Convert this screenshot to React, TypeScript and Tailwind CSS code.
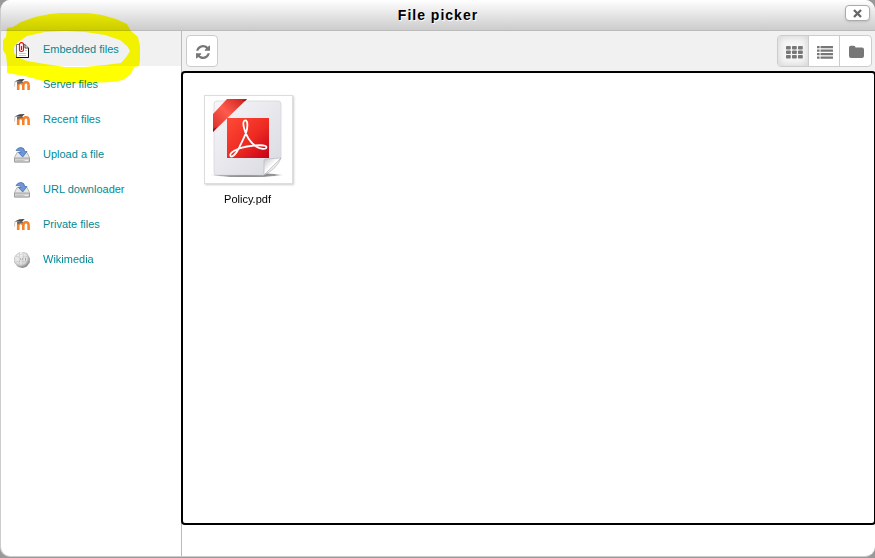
import React, { useState } from 'react'

function PaperclipIcon() {
  return (
    <svg width="16" height="16" viewBox="0 0 16 16" aria-hidden="true">
      <path d="M2.5 2.5H11L14.5 6V15.5H2.5Z" fill="#fff" stroke="#777" />
      <path d="M14.5 6V15.5H2" fill="none" stroke="#111" />
      <path d="M11 2.5V6H14.5" fill="none" stroke="#444" />
      <path d="M11 8.5H13M5 11.5H12M5 13.5H12" stroke="#ccc" />
      <rect x="5" y="0" width="5" height="10" fill="#fff" />
      <path d="M7.500 4V8M9.500 3V8Q9.500 9.500 7.500 9.500T5.500 8V2.500Q5.500 .6 7.500 .6T9.500 2.500V4" fill="none" stroke="#f00" strokeWidth="1.200" />
    </svg>
  )
}

function MoodleIcon() {
  return (
    <svg width="16" height="16" viewBox="0 0 16 16" aria-hidden="true">
      <path
        d="M4.200 13V8.800Q4.200 6 6.700 6T9.300 8.800V13M9.300 8.800Q9.300 5.200 12 5.200T14.600 8.800V13"
        fill="none"
        stroke="#f5822a"
        strokeWidth="2.600"
      />
      <path d="M3 5 8.300 4.500l.8 1.800Q6 5.500 3.300 7.800z" fill="#6a6462" />
      <path d="M.5 4.500 5.500 2.200l5.200-.2L8 4.700z" fill="#4a4645" />
      <path d="M1 4.500 .5 9.500" stroke="#bbb" strokeWidth=".8" />
    </svg>
  )
}

function DownloadIcon() {
  return (
    <svg width="16" height="16" viewBox="0 0 16 16" aria-hidden="true">
      <path d="M3 5.500h10l2.500 5v4.500H.5v-4.500z" fill="#e6e6e6" stroke="#aaa" strokeWidth=".8" />
      <path d="M.5 11h15v4H.5z" fill="#d2d2d2" stroke="#8c8c8c" strokeWidth=".7" />
      <path d="M2.500 13.500h7" stroke="#c0c0c0" />
      <path d="M11 13.500h3" stroke="#eee" />
      <path d="M2 3.500Q3.500.5 7 .5q3.500.2 3.700 4H13L8.700 10 4.500 5.500H7Q6.500 3 2 3.500z" fill="#6f97d6" stroke="#4671b5" strokeWidth=".8" />
    </svg>
  )
}

function WikimediaIcon() {
  return (
    <svg width="16" height="16" viewBox="0 0 16 16" aria-hidden="true">
      <defs>
        <radialGradient id="globe" cx=".4" cy=".35" r=".65">
          <stop offset="0" stopColor="#fafafa" />
          <stop offset=".65" stopColor="#dcdcdc" />
          <stop offset="1" stopColor="#808080" />
        </radialGradient>
      </defs>
      <path d="M2.500 2.500 6 .3l1 1 2-1.300L13 1.500l2.800 5-.2 4-3 4L8.300 16l-4.500-1.500L.3 10V5.500z" fill="url(#globe)" stroke="#999" strokeWidth=".4" />
      <path d="M2 4.500 5 5l1-3M5 5l.5 4L2 10M5.500 9 9 9.500 9.500 5 5 5M9.500 5l4-.5M9 9.500l5 .5M9 9.500 8.500 14M5.500 9 5 13.500M9.500 5 9 2" fill="none" stroke="#a8a8a8" strokeWidth=".4" />
      <path d="m6 6 1 2M8.500 6 8 8M11.500 6v2.500" stroke="#777" strokeWidth=".6" />
      <path d="m5 .8 2 2 2-2" fill="#fff" stroke="#999" strokeWidth=".4" />
    </svg>
  )
}

function RefreshIcon() {
  return (
    <svg width="14" height="14" viewBox="0 0 1536 1536" fill="#777" aria-hidden="true">
      <path d="M1511 928q0 5-1 7-64 268-268 434.500t-478 166.500q-146 0-282.500-55t-243.500-157l-129 129q-19 19-45 19t-45-19-19-45v-448q0-26 19-45t45-19h448q26 0 45 19t19 45-19 45l-137 137q71 66 161 102t187 36q134 0 250-65t186-179q11-17 53-117 8-23 30-23h192q13 0 22.500 9.500t9.500 22.500zm25-800v448q0 26-19 45t-45 19h-448q-26 0-45-19t-19-45 19-45l138-138q-148-137-349-137-134 0-250 65t-186 179q-11 17-53 117-8 23-30 23h-199q-13 0-22.500-9.500t-9.500-22.500v-7q65-268 270-434.500t480-166.500q146 0 284 55.500t245 156.500l130-129q19-19 45-19t45 19 19 45z" />
    </svg>
  )
}

function GridIcon() {
  return (
    <svg width="17" height="14" viewBox="0 0 17 14" fill="#777" aria-hidden="true">
      {[1, 5.5, 10].map((y) => [0, 6, 12].map((x) => (
        <rect key={`${x}-${y}`} x={x} y={y} width="4.800" height="3.600" rx=".8" />
      )))}
    </svg>
  )
}

function ListIcon() {
  return (
    <svg width="16" height="14" viewBox="0 0 16 14" fill="#777" aria-hidden="true">
      {[1, 4.5, 8, 11.5].map((y) => (
        <g key={y}>
          <rect x="0" y={y} width="2.600" height="2.200" rx=".3" />
          <rect x="3.500" y={y} width="12.500" height="2.200" rx=".3" />
        </g>
      ))}
    </svg>
  )
}

function FolderIcon() {
  return (
    <svg width="16" height="14" viewBox="0 0 16 14" fill="#777" aria-hidden="true">
      <path d="M0 2.500Q0 .8 1.800.8h3Q6.500.8 6.500 2.600H13q2 0 2 1.900v6.500q0 1.900-2 1.900H2q-2 0-2-1.900z" />
    </svg>
  )
}

function PdfIcon() {
  return (
    <svg width="84" height="84" viewBox="0 0 84 84" aria-hidden="true">
      <defs>
        <linearGradient id="paper" x1="0" y1="0" x2="1" y2="1">
          <stop offset="0" stopColor="#f6f6f9" />
          <stop offset="1" stopColor="#d9dae1" />
        </linearGradient>
        <linearGradient id="red" x1="0" y1="0" x2="1" y2="1">
          <stop offset="0" stopColor="#ff4b38" />
          <stop offset=".55" stopColor="#ee2a22" />
          <stop offset="1" stopColor="#c4001a" />
        </linearGradient>
        <linearGradient id="ribbon" x1="0" y1="1" x2="1" y2="0">
          <stop offset="0" stopColor="#d62a26" />
          <stop offset=".5" stopColor="#ff5a4c" />
          <stop offset="1" stopColor="#c81c1c" />
        </linearGradient>
        <linearGradient id="curl" x1="0" y1="0" x2="1" y2="1">
          <stop offset="0" stopColor="#c2c3c9" />
          <stop offset=".45" stopColor="#fff" />
          <stop offset="1" stopColor="#aaa" />
        </linearGradient>
        <radialGradient id="ground">
          <stop offset="0" stopColor="#666" />
          <stop offset=".75" stopColor="#999" />
          <stop offset="1" stopColor="#fff" stopOpacity="0" />
        </radialGradient>
      </defs>
      <ellipse cx="41" cy="78" rx="38" ry="2.500" fill="url(#ground)" />
      <path d="M11 4h61q3 0 3 3v54L58 78H11q-3 0-3-3V7q0-3 3-3z" fill="url(#paper)" stroke="#d4d5dc" strokeWidth=".8" />
      <path d="M21 2h20L7 35V17z" fill="url(#ribbon)" />
      <path d="M7 35v-3l4-2zM41 2l-5 2h3z" fill="#8d1010" />
      <rect x="21" y="21" width="42" height="40" fill="url(#red)" />
      <path
        d="M39 23.500C42 23 41.500 29 41 32C40 38 36 44 33 51C30 57 26 61 24.500 59C22.500 56 31 51 41 49.500C50 48 60 47.500 60.500 50C61 53 54 52 50 49.500C43 44.500 39.500 37 38 31C37 27 37 24 39 23.500Z"
        fill="none"
        stroke="#fff"
        strokeWidth="1.800"
      />
      <path d="M58 78V64q0-2 2-2l15-1q-6 10-17 17z" fill="url(#curl)" stroke="#b8b9c0" strokeWidth=".7" />
      <path d="M58 78 75 61q-4 11-17 17z" fill="#e9e9ed" stroke="#aaa" strokeWidth=".5" />
    </svg>
  )
}

// hand drawn marker ring around the first repository
function Highlight() {
  return (
    <svg className="pointer-events-none absolute top-0 left-0 mix-blend-multiply" width="145" height="90" viewBox="1 0 145 90" aria-hidden="true">
      <path
        fill="#ff0"
        fillRule="evenodd"
        d="M7 28L13 27L21 22L35 17L50 14L60 13H88L102 15L116 19L127 24L131 31L138 37L140 46V60L139 66L134 67L131 74L123 80L113 82L85 83H60L43 81L25 76L7 73V64L6 55L3 50V40L6 37ZM27 36L45 32L65 31L85 32L105 35L120 40L128 47L130 51L127 56L121 63L105 65L85 67H65L45 64L27 61L17 57L14 53V47L17 43Z"
      />
    </svg>
  )
}

const repositories = [
  { name: 'Embedded files', Icon: PaperclipIcon },
  { name: 'Server files', Icon: MoodleIcon },
  { name: 'Recent files', Icon: MoodleIcon },
  { name: 'Upload a file', Icon: DownloadIcon },
  { name: 'URL downloader', Icon: DownloadIcon },
  { name: 'Private files', Icon: MoodleIcon },
  { name: 'Wikimedia', Icon: WikimediaIcon },
]

const views = [
  { label: 'Display as icons', Icon: GridIcon },
  { label: 'Display as list', Icon: ListIcon },
  { label: 'Display as tree', Icon: FolderIcon },
]

export default function App() {
  const [repo, setRepo] = useState('Embedded files')
  const [view, setView] = useState('Display as icons')

  return (
    <div className="flex min-h-screen flex-col bg-[#999] pb-px font-['Liberation_Sans',Arial,sans-serif] text-[11px] text-black">
      <div className="relative isolate flex flex-1 flex-col overflow-hidden rounded-[10px] border-b border-l border-[#ccc] bg-white">
        <header className="grid h-[31px] grid-cols-[1fr_auto_1fr] items-center border-b border-[#bbb] bg-gradient-to-b from-white to-[#ccc]">
          <h1 className="col-start-2 text-sm font-bold tracking-[1px] [text-shadow:1px_1px_1px_#fff]">File picker</h1>
          <button aria-label="Close" className="mr-[5px] mb-1 flex h-4 w-[25px] items-center justify-center justify-self-end rounded border border-[#aaa] bg-white shadow-sm">
            <svg width="9" height="9" viewBox="0 0 9 9" stroke="#666" strokeWidth="2.300" aria-hidden="true">
              <path d="m1 1 7 7M8 1 1 8" />
            </svg>
          </button>
        </header>

        <div className="flex flex-1">
          <nav className="w-[181px] shrink-0 border-r border-[#bbb]">
            <ul>
              {repositories.map(({ name, Icon }) => (
                <li key={name} className={name === repo ? 'bg-[#f1f1f1]' : ''}>
                  <a
                    href="#"
                    onClick={() => setRepo(name)}
                    className="flex h-[35px] items-center gap-3 px-3 text-[#008a95]"
                  >
                    <span className="w-[18px] pt-[3px] pl-px"><Icon /></span>
                    <span className="pt-0.5 leading-[17px]">{name}</span>
                  </a>
                </li>
              ))}
            </ul>
          </nav>

          <main className="flex min-w-0 flex-1 flex-col pb-8">
            <div className="flex h-[41px] items-start justify-between bg-[#f1f1f1] pt-1 pr-[3px] pl-1">
              <button aria-label="Refresh" className="flex h-8 w-8 items-center justify-center rounded border border-[#ccc] bg-white pt-0.5 pl-0.5">
                <RefreshIcon />
              </button>
              <div className="flex h-8 divide-x divide-[#ccc] overflow-hidden rounded border border-[#ccc] bg-white">
                {views.map(({ label, Icon }) => (
                  <button
                    key={label}
                    aria-label={label}
                    onClick={() => setView(label)}
                    className={`flex w-[31px] items-center justify-center pt-0.5 pl-0.5 ${view === label ? 'bg-[#f7f7f7] shadow-[inset_0_0_8px_#ccc]' : ''}`}
                  >
                    <Icon />
                  </button>
                ))}
              </div>
            </div>

            <div className="flex-1 rounded-[3px] bg-white px-[22px] pt-[23px] outline-2 -outline-offset-1 outline-black">
              <a href="#" className="flex w-[89px] flex-col items-center gap-[7px]">
                <span className="flex h-[89px] w-full items-start border border-[#ddd] bg-white pt-px pl-px shadow-[1px_1px_2px_#ccc]">
                  <PdfIcon />
                </span>
                <span className="pr-0.5 leading-4">Policy.pdf</span>
              </a>
            </div>
          </main>
        </div>
        <Highlight />
      </div>
    </div>
  )
}
